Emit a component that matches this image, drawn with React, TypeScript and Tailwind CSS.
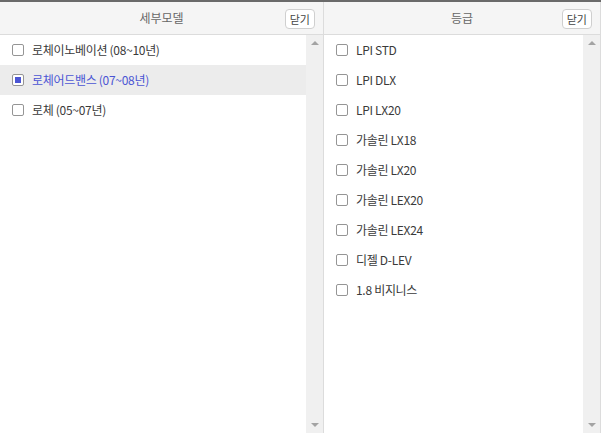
import React from "react";

const font = { fontFamily: '"Noto Sans CJK KR", "Noto Sans", sans-serif' };

function Scrollbar() {
  return (
    <div className="w-[17px] shrink-0 bg-[#f0f0f0] flex flex-col justify-between items-center py-[6px]">
      <div className="w-0 h-0 border-l-[4px] border-r-[4px] border-b-[4px] border-l-transparent border-r-transparent border-b-[#a3a3a3]" />
      <div className="w-0 h-0 border-l-[4px] border-r-[4px] border-t-[4px] border-l-transparent border-r-transparent border-t-[#a3a3a3]" />
    </div>
  );
}

function Row({ label, checked }: { label: string; checked?: boolean }) {
  return (
    <div className={`h-[30px] flex items-center pl-[12px] ${checked ? "bg-[#ececec] text-[#4b55d4]" : "text-[#3a3a3a]"}`}>
      <div className="w-[12px] h-[12px] border border-[#959595] rounded-[2px] bg-white flex items-center justify-center mr-[8px]">
        {checked && <div className="w-[6px] h-[6px] bg-[#4b55d4]" />}
      </div>
      <span className="text-[12px] leading-none tracking-[-0.3px]">{label}</span>
    </div>
  );
}

function Panel({ title, items, selected, width }: { title: string; items: string[]; selected?: number; width: string }) {
  return (
    <div className={`${width} flex flex-col h-full`}>
      <div className="h-[33px] shrink-0 bg-[#f5f5f5] border-b border-[#dcdcdc] flex items-center justify-center relative">
        <span className="text-[12px] text-[#666]">{title}</span>
        <div className="absolute right-[8px] top-[7px] h-[20px] px-[4px] border border-[#cfcfcf] rounded-[4px] bg-white flex items-center text-[11px] text-[#444]">
          닫기
        </div>
      </div>
      <div className="flex flex-1 min-h-0">
        <div className="flex-1 bg-white">
          {items.map((it, i) => (
            <Row key={it} label={it} checked={i === selected} />
          ))}
        </div>
        <Scrollbar />
      </div>
    </div>
  );
}

export default function App() {
  return (
    <div style={font} className="w-[601px] h-[433px] bg-white flex flex-col overflow-hidden">
      <div className="h-[2px] bg-[#6a6a6a] shrink-0" />
      <div className="flex flex-1 min-h-0">
        <Panel
          width="w-[323px]"
          title="세부모델"
          items={["로체이노베이션 (08~10년)", "로체어드밴스 (07~08년)", "로체 (05~07년)"]}
          selected={1}
        />
        <div className="w-px bg-[#dcdcdc]" />
        <Panel
          width="w-[276px]"
          title="등급"
          items={["LPI STD", "LPI DLX", "LPI LX20", "가솔린 LX18", "가솔린 LX20", "가솔린 LEX20", "가솔린 LEX24", "디젤 D-LEV", "1.8 비지니스"]}
        />
        <div className="w-px bg-[#dcdcdc]" />
      </div>
    </div>
  );
}
